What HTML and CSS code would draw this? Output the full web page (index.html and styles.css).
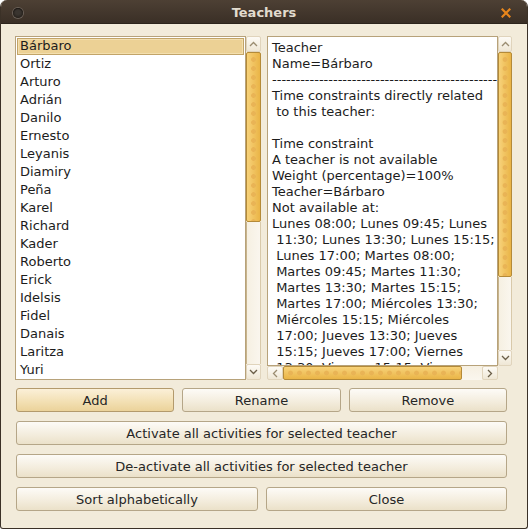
FILE: index.html
```html
<!DOCTYPE html>
<html>
<head>
<meta charset="utf-8">
<link rel="stylesheet" href="styles.css">
</head>
<body>
<div class="window">
  <div class="titlebar">
    <span class="menu-dot"></span>
    <span class="title">Teachers</span>
    <svg class="close" width="10" height="10" viewBox="0 0 10 10"><path d="M1.5 1.5 L8.5 8.5 M8.5 1.5 L1.5 8.5" stroke="#e8861c" stroke-width="2.2" stroke-linecap="square"/></svg>
  </div>
  <div class="content">
    <div class="panes">
      <div class="pane left">
        <div class="listbox">
          <div class="row selected">Bárbaro</div>
          <div class="row">Ortiz</div>
          <div class="row">Arturo</div>
          <div class="row">Adrián</div>
          <div class="row">Danilo</div>
          <div class="row">Ernesto</div>
          <div class="row">Leyanis</div>
          <div class="row">Diamiry</div>
          <div class="row">Peña</div>
          <div class="row">Karel</div>
          <div class="row">Richard</div>
          <div class="row">Kader</div>
          <div class="row">Roberto</div>
          <div class="row">Erick</div>
          <div class="row">Idelsis</div>
          <div class="row">Fidel</div>
          <div class="row">Danais</div>
          <div class="row">Laritza</div>
          <div class="row">Yuri</div>
        </div>
        <div class="vscroll">
          <div class="arrow up"><svg width="9" height="6" viewBox="0 0 9 6"><path d="M1 5 L4.5 1.5 L8 5" fill="none" stroke="#9a8c70" stroke-width="1.3"/></svg></div>
          <div class="thumb thumb-left"></div>
          <div class="trough"></div>
          <div class="arrow down"><svg width="9" height="6" viewBox="0 0 9 6"><path d="M1 1 L4.5 4.5 L8 1" fill="none" stroke="#6a5e48" stroke-width="1.3"/></svg></div>
        </div>
      </div>
      <div class="pane right">
        <div class="textcol">
          <div class="textbox">
<pre class="text">Teacher
Name=Bárbaro
----------------------------------------------------------------
Time constraints directly related
 to this teacher:

Time constraint
A teacher is not available
Weight (percentage)=100%
Teacher=Bárbaro
Not available at:
Lunes 08:00; Lunes 09:45; Lunes
 11:30; Lunes 13:30; Lunes 15:15;
 Lunes 17:00; Martes 08:00;
 Martes 09:45; Martes 11:30;
 Martes 13:30; Martes 15:15;
 Martes 17:00; Miércoles 13:30;
 Miércoles 15:15; Miércoles
 17:00; Jueves 13:30; Jueves
 15:15; Jueves 17:00; Viernes
 13:30; Viernes 15:15; Viernes
 17:00</pre>
          </div>
          <div class="hscroll">
            <div class="harrow"><svg width="6" height="9" viewBox="0 0 6 9"><path d="M5 1 L1.5 4.5 L5 8" fill="none" stroke="#9a8c70" stroke-width="1.3"/></svg></div>
            <div class="hthumb"></div>
            <div class="htrough"></div>
            <div class="harrow"><svg width="6" height="9" viewBox="0 0 6 9"><path d="M1 1 L4.5 4.5 L1 8" fill="none" stroke="#6a5e48" stroke-width="1.3"/></svg></div>
          </div>
        </div>
        <div class="vcol">
          <div class="vscroll short">
            <div class="arrow up"><svg width="9" height="6" viewBox="0 0 9 6"><path d="M1 5 L4.5 1.5 L8 5" fill="none" stroke="#9a8c70" stroke-width="1.3"/></svg></div>
            <div class="thumb thumb-right"></div>
            <div class="trough"></div>
            <div class="arrow down"><svg width="9" height="6" viewBox="0 0 9 6"><path d="M1 1 L4.5 4.5 L8 1" fill="none" stroke="#6a5e48" stroke-width="1.3"/></svg></div>
          </div>
          <div class="corner"></div>
        </div>
      </div>
    </div>
    <div class="buttons">
      <div class="btn-row three">
        <button class="btn hot">Add</button>
        <button class="btn">Rename</button>
        <button class="btn">Remove</button>
      </div>
      <div class="btn-row">
        <button class="btn wide">Activate all activities for selected teacher</button>
      </div>
      <div class="btn-row">
        <button class="btn wide">De-activate all activities for selected teacher</button>
      </div>
      <div class="btn-row two">
        <button class="btn">Sort alphabetically</button>
        <button class="btn">Close</button>
      </div>
    </div>
  </div>
</div>
</body>
</html>
```
FILE: styles.css
```css
* { box-sizing: border-box; }
html, body {
  margin: 0;
  padding: 0;
  background: #ffffff;
}
body {
  font-family: "DejaVu Sans", "Liberation Sans", sans-serif;
  font-size: 13px;
  color: #1c1c1c;
}
.window {
  width: 528px;
  height: 529px;
  background: #f2ebda;
  border: 1px solid #3b3127;
  border-top: none;
  border-radius: 7px 7px 3px 3px;
  overflow: hidden;
  display: flex;
  flex-direction: column;
}
.titlebar {
  height: 24px;
  flex: none;
  background: linear-gradient(#4d4034, #3a2f26);
  display: flex;
  align-items: center;
  position: relative;
  border-bottom: 1px solid #2c241c;
}
.menu-dot {
  position: absolute;
  left: 12px;
  top: 8px;
  width: 10px;
  height: 10px;
  border-radius: 50%;
  background: radial-gradient(circle at 50% 40%, #3a3530 30%, #2a2520 70%);
  box-shadow: 0 0 0 1px #6a6058, inset 0 1px 1px #1c1814;
}
.title {
  flex: 1;
  text-align: center;
  font-weight: bold;
  font-size: 13px;
  color: #e2dccf;
  padding-top: 1px;
}
.close {
  position: absolute;
  right: 16px;
  top: 8px;
}
.content {
  flex: 1;
  padding: 12px 15px 0 14px;
  display: flex;
  flex-direction: column;
}
.panes {
  display: flex;
  gap: 6px;
  height: 344px;
}
.pane {
  display: flex;
  height: 100%;
}
.pane.left { width: 246px; }
.pane.right { width: 245px; }
.listbox {
  width: 231px;
  height: 100%;
  background: #ffffff;
  border: 1px solid #b7a27a;
  padding: 1px 1px;
  overflow: hidden;
}
.row {
  height: 18px;
  line-height: 16px;
  padding-left: 3px;
}
.selected {
  background: #ecd195;
  border: 1px solid #c2a468;
  height: 17px;
  line-height: 14px;
  padding-left: 2px;
  margin-bottom: 1px;
  box-shadow: inset 0 0 0 1px #f3dfae;
}
.vscroll {
  width: 15px;
  height: 100%;
  display: flex;
  flex-direction: column;
  background: #f3ecdc;
}
.arrow {
  height: 16px;
  flex: none;
  background: linear-gradient(#fdfbf6, #efe7d5);
  border: 1px solid #e0d4bc;
  border-radius: 2px;
  display: flex;
  align-items: center;
  justify-content: center;
}
.thumb {
  flex: none;
  border: 1px solid #b48a38;
  border-radius: 2px;
  background-color: #efbb4c;
  background-image:
    radial-gradient(circle at 50% 50%, rgba(232, 178, 84, 0.9) 2px, rgba(232, 178, 84, 0) 2.8px),
    linear-gradient(to right, #f7d27a, #eab446);
  background-size: 100% 9px, 100% 100%;
  background-position: 0 2px, 0 0;
  background-repeat: repeat-y, no-repeat;
}
.thumb-left { height: 170px; }
.thumb-right { height: 225px; }
.trough {
  flex: 1;
  background: linear-gradient(to right, #f6f0e2, #faf6ee);
  border-left: 1px solid #c8b48c;
  border-right: 1px solid #d8c9aa;
}
.textcol {
  width: 231px;
  display: flex;
  flex-direction: column;
  height: 100%;
}
.textbox {
  flex: 1;
  background: #ffffff;
  border: 1px solid #b7a27a;
  overflow: hidden;
  padding: 3px 0 0 4px;
}
.text {
  margin: 0;
  font-family: "DejaVu Sans", "Liberation Sans", sans-serif;
  font-size: 13px;
  line-height: 16px;
  white-space: pre;
  color: #1c1c1c;
}
.hscroll {
  height: 14px;
  flex: none;
  display: flex;
  background: #f3ecdc;
}
.harrow {
  width: 16px;
  flex: none;
  background: linear-gradient(#fdfbf6, #efe7d5);
  border: 1px solid #e0d4bc;
  border-radius: 2px;
  display: flex;
  align-items: center;
  justify-content: center;
}
.hthumb {
  width: 179px;
  flex: none;
  border: 1px solid #b48a38;
  border-radius: 2px;
  background-image:
    radial-gradient(circle at 50% 50%, rgba(232, 178, 84, 0.9) 2px, rgba(232, 178, 84, 0) 2.8px),
    linear-gradient(#f7d27a, #eab446);
  background-size: 9px 100%, 100% 100%;
  background-position: 2px 0, 0 0;
  background-repeat: repeat-x, no-repeat;
}
.htrough {
  flex: 1;
  background: linear-gradient(#f6f0e2, #faf6ee);
}
.vcol {
  width: 14px;
  display: flex;
  flex-direction: column;
  height: 100%;
}
.vscroll.short {
  width: 14px;
  height: auto;
  flex: 1;
}
.corner {
  height: 14px;
  flex: none;
}
.buttons {
  display: flex;
  flex-direction: column;
  gap: 9px;
  margin-top: 8px;
  padding-left: 1px;
  width: 492px;
}
.btn-row {
  display: flex;
  gap: 8px;
}
.btn-row.three .btn { flex: 1; }
.btn-row.two .btn:first-child { width: 242px; flex: none; }
.btn-row.two .btn:last-child { flex: 1; }
.btn {
  height: 24px;
  font-family: "DejaVu Sans", "Liberation Sans", sans-serif;
  font-size: 13px;
  color: #262626;
  background: linear-gradient(#fdfbf7, #f3ecdc 60%, #ebe1c9);
  border: 1px solid #b5a688;
  border-radius: 3px;
  padding: 0;
  margin: 0;
}
.btn.wide { flex: 1; }
.btn.hot {
  background: linear-gradient(#fbf0d8, #f2dfb2 60%, #ebd29a);
  border-color: #b39a6c;
}
```
